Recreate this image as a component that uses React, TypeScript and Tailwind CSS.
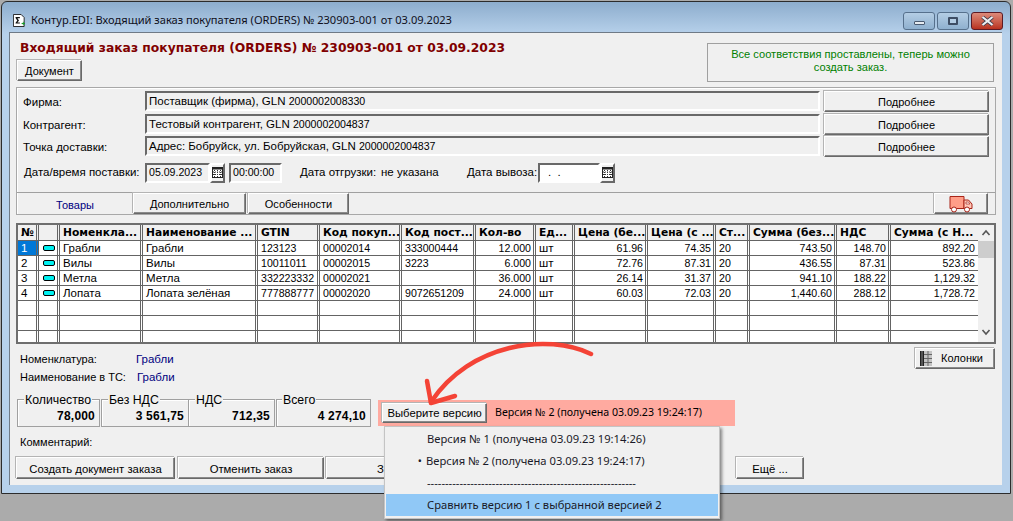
import React from "react";

const btn =
  "flex items-center justify-center bg-[#f0f0f0] border border-t-white border-l-white border-r-[#696969] border-b-[#696969] shadow-[inset_-1px_-1px_0_#8a8a8a,-1px_-1px_0_#b4b4b4] text-black";
const field =
  "flex items-center bg-[#f0f0f0] border-2 border-t-[#696969] border-l-[#696969] border-r-white border-b-white pl-[2px] pt-[1px]";

const widths = "grid grid-cols-[21px_21px_83px_115px_62px_82px_74px_60px_39px_73px_68px_34px_87px_54px_86px]";

const headers = ["№", "", "Номенкла...", "Наименование ...", "GTIN", "Код покуп...", "Код пост...", "Кол-во", "Ед...", "Цена (бе...", "Цена (с ...", "Ст...", "Сумма (без...", "НДС", "Сумма (с Н..."];

const rows = [
  ["1", "", "Грабли", "Грабли", "123123", "00002014", "333000444", "12.000", "шт", "61.96", "74.35", "20", "743.50", "148.70", "892.20"],
  ["2", "", "Вилы", "Вилы", "10011011", "00002015", "3223", "6.000", "шт", "72.76", "87.31", "20", "436.55", "87.31", "523.86"],
  ["3", "", "Метла", "Метла", "332223332", "00002021", "", "36.000", "шт", "26.14", "31.37", "20", "941.10", "188.22", "1,129.32"],
  ["4", "", "Лопата", "Лопата зелёная", "777888777", "00002020", "9072651209", "24.000", "шт", "60.03", "72.03", "20", "1,440.60", "288.12", "1,728.72"],
  ["", "", "", "", "", "", "", "", "", "", "", "", "", "", ""],
  ["", "", "", "", "", "", "", "", "", "", "", "", "", "", ""],
  ["", "", "", "", "", "", "", "", "", "", "", "", "", "", ""],
];
const rightCols = [7, 9, 10, 12, 13, 14];

// The reference's UI font has narrow digits: numbers get a slightly smaller size.
function Mixed({ text }: { text: string }) {
  const parts = text.split(/([\d.,:]{2,})/);
  return (
    <span className="whitespace-pre">
      {parts.map((p, i) =>
        i % 2 === 1 ? (
          <span key={i} className="text-[10.6px]">{p}</span>
        ) : (
          <span key={i}>{p}</span>
        )
      )}
    </span>
  );
}

function Calendar() {
  return (
    <svg width="11" height="11" viewBox="0 0 11 11">
      <rect x="0.5" y="0.5" width="10" height="10" fill="#fff" stroke="#222" />
      <rect x="0.5" y="0.5" width="10" height="2" fill="#222" />
      <path d="M2.5 3v7M5.5 3v7M8.5 3v7M1 5h9M1 7.5h9" stroke="#333" strokeWidth="1" strokeDasharray="1 1" />
    </svg>
  );
}

function CalButton({ cls }: { cls: string }) {
  return (
    <div className={`flex items-center justify-center bg-[#f0f0f0] border-2 border-t-white border-l-white border-r-[#696969] border-b-[#696969] ${cls}`}>
      <Calendar />
    </div>
  );
}

function Truck() {
  return (
    <svg width="24" height="18" viewBox="0 0 24 18">
      <path d="M1 1.5h14v12H1z" fill="#ff9e88" stroke="#a82418" />
      <path d="M15 5h4.5l3.5 4v4.5h-8z" fill="#ffc8b8" stroke="#a82418" />
      <path d="M17 7h2.5l1.5 2h-4z" fill="#fff" stroke="#a82418" strokeWidth="0.7" />
      <circle cx="5" cy="14.5" r="2.5" fill="#fff" stroke="#a82418" />
      <circle cx="18" cy="14.5" r="2.5" fill="#fff" stroke="#a82418" />
    </svg>
  );
}

function ColumnsIcon() {
  return (
    <svg width="12" height="15" viewBox="0 0 12 15" className="shrink-0">
      <rect x="0" y="0" width="1" height="15" fill="#222" />
      <rect x="3" y="0" width="1" height="15" fill="#222" />
      <rect x="1" y="0" width="2" height="15" fill="#555" />
      <rect x="4" y="0" width="8" height="15" fill="#c4c4c4" />
      <path d="M4 3.5h8M4 7.5h8M4 11.5h8M8 0v15" stroke="#666" strokeWidth="1" />
    </svg>
  );
}

function Group({ label, value, w, labelLeft }: { label: string; value: string; w: string; labelLeft: string }) {
  return (
    <div className={`relative h-[28px] border border-[#a0a0a0] shadow-[inset_1px_1px_0_#fff] flex items-end justify-end pr-[4px] pb-[3px] ${w}`}>
      <span className={`absolute -top-[7px] bg-[#f0f0f0] px-[1px] leading-[14px] text-[12.3px] ${labelLeft}`}>{label}</span>
      <span className="font-bold text-[12px] tracking-[0.2px] leading-[14px]">{value}</span>
    </div>
  );
}

export default function App() {
  return (
    <div className="relative w-[1013px] h-[521px] overflow-hidden bg-[#ababab] font-['Liberation_Sans',sans-serif] text-[11.5px] text-black">
      <div className="ml-[1px] mt-[1px] w-[1010px] h-[493px] border border-[#2c2c2c] rounded-t-[6px] bg-[#b7d1eb] bg-gradient-to-b from-[#8dadcd] to-[#b7d1eb] bg-[length:100%_32px] bg-no-repeat">
        {/* Title bar */}
        <div className="h-[30px] flex items-center pt-[6px] pl-[11px] pr-[7px]">
          <svg width="12" height="13" viewBox="0 0 14 15" className="shrink-0">
            <path d="M0.5 0.5h9l3.5 3.5v10.5h-12.5z" fill="#fff" stroke="#111" />
            <path d="M3 3.5h5v1.3H5.2l1.8 2.6-1.8 2.4H8v1.3H3v-1l2-2.7-2-2.9z" fill="#111" />
            <path d="M10 10.5h1.5V9h1v1.5H14v1h-1.5V13h-1v-1.5H10z" fill="#1a9a2a" />
          </svg>
          <span className="ml-[6px] text-[11.1px] text-[#10101c] font-['Noto_Sans',sans-serif]">Контур.EDI: Входящий заказ покупателя (ORDERS) № 230903-001 от 03.09.2023</span>
          <div className="ml-auto flex gap-[2px] mt-[1px]">
            <div className="w-[32px] h-[18px] rounded-[3px] border border-[#56708c] bg-gradient-to-b from-[#b4cde4] to-[#8fb0cf] flex items-center justify-center">
              <div className="w-[11px] h-[4px] mt-[4px] rounded-[1px] bg-[#e6ebf0] border border-[#4a5a70]" />
            </div>
            <div className="w-[32px] h-[18px] rounded-[3px] border border-[#56708c] bg-gradient-to-b from-[#b4cde4] to-[#8fb0cf] flex items-center justify-center">
              <div className="w-[10px] h-[8px] rounded-[1px] border-2 border-[#3e4d64] bg-[#b4cde4]" />
            </div>
            <div className="w-[32px] h-[18px] rounded-[3px] border border-[#5c1a24] bg-gradient-to-b from-[#dc8a7a] to-[#b8301e] flex items-center justify-center">
              <svg width="13" height="10" viewBox="0 0 13 10">
                <path d="M1.5 1l10 8M11.5 1l-10 8" stroke="#3a3a48" strokeWidth="3.6" />
                <path d="M1.5 1l10 8M11.5 1l-10 8" stroke="#eef0f4" strokeWidth="2.2" />
              </svg>
            </div>
          </div>
        </div>

        {/* Client */}
        <div className="ml-[7px] w-[993px] h-[453px] border-t border-l border-[#6f7a86] bg-[#f0f0f0]">
          {/* Header */}
          <div className="h-[54px] flex">
            <div className="pl-[7px]">
              <div className="mt-[7px] pl-[3px] h-[16px] leading-[16px] font-['DejaVu_Sans'] font-bold text-[12.32px] text-[#800000] whitespace-nowrap">
                Входящий заказ покупателя (ORDERS) № 230903-001 от 03.09.2023
              </div>
              <div className={`${btn} mt-[4px] w-[65px] h-[21px] pt-[1px] text-[11px]`}>Документ</div>
            </div>
            <div className="ml-auto mr-[8px] mt-[10px] w-[287px] h-[39px] border border-[#a0a0a0] text-[#008000] text-center text-[11.1px] leading-[13px] pt-[4px] px-[10px]">
              Все соответствия проставлены, теперь можно создать заказ.
            </div>
          </div>

          {/* Panel */}
          <div className="ml-[6px] w-[980px] h-[128px] border border-[#a8a8a8] shadow-[inset_1px_1px_0_#fff] pt-[3px]">
            {[
              ["Фирма:", "Поставщик (фирма), GLN 2000002008330", "mt-0"],
              ["Контрагент:", "Тестовый контрагент, GLN 2000002004837", "mt-[3px]"],
              ["Точка доставки:", "Адрес: Бобруйск, ул. Бобруйская, GLN 2000002004837", "mt-[2px]"],
            ].map(([l, v, m]) => (
              <div key={l} className={`flex h-[20px] ${m}`}>
                <div className="w-[128px] pl-[6px] leading-[22px]">{l}</div>
                <div className={`${field} w-[675px] h-[20px]`}><Mixed text={v} /></div>
                <div className={`${btn} ml-[4px] w-[165px] h-[21px] pt-[1px] text-[11px]`}>Подробнее</div>
              </div>
            ))}
            <div className="flex items-center h-[21px] mt-[6px]">
              <div className="w-[128px] pl-[7px] pt-[1px] whitespace-nowrap">Дата/время поставки:</div>
              <div className={`${field} w-[65px] h-[20px]`}><Mixed text="05.09.2023" /></div>
              <CalButton cls="w-[15px] h-[20px]" />
              <div className={`${field} w-[53px] h-[20px] ml-[4px]`}><Mixed text="00:00:00" /></div>
              <div className="ml-[18px] w-[167px] whitespace-nowrap pt-[1px] flex">
                <span className="w-[81px]">Дата отгрузки:</span>
                <span>не указана</span>
              </div>
              <div className="w-[71px] whitespace-nowrap pt-[1px]">Дата вывоза:</div>
              <div className="w-[62px] h-[20px] flex items-center bg-white border-2 border-t-[#696969] border-l-[#696969] border-r-white border-b-white pl-[8px]">. &nbsp;.</div>
              <CalButton cls="w-[15px] h-[20px]" />
            </div>
            <div className="mt-[9px] h-[21px] border-t border-[#a0a0a0] flex">
              <div className="w-[116px] text-center text-[#000080] leading-[24px] text-[11px]">Товары</div>
              <div className={`${btn} w-[113px] h-[21px] pt-[1px] text-[11px]`}>Дополнительно</div>
              <div className={`${btn} ml-[2px] w-[101px] h-[21px] pt-[1px] text-[11px]`}>Особенности</div>
              <div className={`${btn} ml-[585px] w-[54px] h-[21px]`}><Truck /></div>
            </div>
          </div>

          {/* Grid */}
          <div className="ml-[6px] mt-[8px] w-[980px] h-[121px] border-2 border-[#6e6e6e] bg-white flex overflow-hidden">
            <div className="w-[960px] overflow-hidden">
              <div className={`${widths} h-[16px] bg-[#f0f0f0] border-b border-[#646464]`}>
                {headers.map((h, i) => (
                  <div key={i} className={`${i === 14 ? "" : "border-r-[3px] border-double border-[#646464]"} pl-[3px] whitespace-nowrap font-['DejaVu_Sans'] font-bold text-[10.7px] leading-[15px]`}>
                    {h}
                  </div>
                ))}
              </div>
              {rows.map((r, ri) => (
                <div key={ri} className={`${widths} h-[15px] border-b border-[#646464]`}>
                  {r.map((c, i) => {
                    const selected = ri === 0 && i === 0;
                    const sep = i === 14 ? "" : "border-r-[3px] border-double border-[#646464] ";
                    const base = sep + "whitespace-nowrap overflow-hidden leading-[14px] pl-[3px] pr-[2px] flex items-center";
                    const al = rightCols.includes(i) ? " justify-end" : "";
                    const sel = selected ? " bg-[#0078d7] text-white" : "";
                    return (
                      <div key={i} className={base + al + sel}>
                        {i === 1 && ri < 4 ? (
                          <div className="ml-[1px] w-[12px] h-[6px] rounded-[2px] bg-[#00f0f0] border border-black" />
                        ) : (
                          <Mixed text={c} />
                        )}
                      </div>
                    );
                  })}
                </div>
              ))}
            </div>
            <div className="w-[16px] bg-[#f0f0f0] flex flex-col items-center">
              <svg width="10" height="16" viewBox="0 0 10 16" className="shrink-0">
                <path d="M1.5 10l3.5-4 3.5 4" fill="none" stroke="#555" strokeWidth="1.6" />
              </svg>
              <div className="w-[16px] h-[17px] bg-[#cdcdcd]" />
              <svg width="10" height="16" viewBox="0 0 10 16" className="mt-auto shrink-0 mb-[2px]">
                <path d="M1.5 6l3.5 4 3.5-4" fill="none" stroke="#555" strokeWidth="1.6" />
              </svg>
            </div>
          </div>

          {/* Info */}
          <div className="h-[50px] flex">
            <div className="pl-[10px] text-[11px]">
              <div className="mt-[8px] h-[14px] leading-[14px] flex">
                <span className="w-[116px]">Номенклатура:</span>
                <span className="text-[#000080] text-[11.5px]">Грабли</span>
              </div>
              <div className="mt-[4px] h-[14px] leading-[14px] flex">
                <span className="w-[117px]">Наименование в ТС:</span>
                <span className="text-[#000080] text-[11.5px]">Грабли</span>
              </div>
            </div>
            <div className={`${btn} ml-auto mr-[7px] mt-[4px] w-[80px] h-[21px] justify-start! pl-[4px] gap-[9px] text-[11px]`}>
              <ColumnsIcon />
              <span>Колонки</span>
            </div>
          </div>

          {/* Totals */}
          <div className="flex pl-[7px] mt-[5px] h-[28px]">
            <Group label="Количество" value="78,000" w="w-[83px]" labelLeft="left-[6px]" />
            <Group label="Без НДС" value="3 561,75" w="w-[88px] ml-[1px]" labelLeft="left-[6px]" />
            <Group label="НДС" value="712,35" w="w-[87px] -ml-[1px]" labelLeft="left-[6px]" />
            <Group label="Всего" value="4 274,10" w="w-[95px] ml-[1px]" labelLeft="left-[5px]" />
            <div className="ml-[7px] mt-[1px] w-[357px] h-[26px] bg-[#ffaaa0] flex items-center pl-[4px]">
              <div className={`${btn} w-[105px] h-[20px] text-[11.3px]`}>Выберите версию</div>
              <span className="ml-[8px] font-['Noto_Sans',sans-serif] text-[10.6px]">Версия № 2 (получена 03.09.23 19:24:17)</span>
            </div>
          </div>

          <div className="mt-[8px] pl-[10px] h-[14px] leading-[14px] text-[11px]">Комментарий:</div>

          <div className="mt-[8px] pl-[6px] flex h-[22px] text-[11.3px]">
            <div className={`${btn} w-[159px] h-[22px] pt-[3px]`}>Создать документ заказа</div>
            <div className={`${btn} ml-[3px] w-[146px] h-[22px] pt-[3px]`}>Отменить заказ</div>
            <div className={`${btn} ml-[2px] w-[148px] h-[22px] pt-[3px] justify-start! pl-[50px]`}>З</div>
            <div className={`${btn} ml-[262px] w-[68px] h-[22px] pt-[3px]`}>Ещё ...</div>
          </div>
        </div>
      </div>

      {/* Drop-down menu */}
      <div className="absolute left-[384px] top-[426px] w-[336px] h-[93px] bg-[#f0f0f0] border border-[#c4c4c4] shadow-[2px_2px_3px_rgba(0,0,0,0.45)] pt-[1px] px-[1px] font-['Noto_Sans',sans-serif] text-[11.2px] text-[#1a1a28]">
        {[
          ["", "Версия № 1 (получена 03.09.23 19:14:26)", "w-[41px]"],
          ["•", "Версия № 2 (получена 03.09.23 19:24:17)", "w-[40px]"],
          ["", "----------------------------------------------------------", "w-[41px]"],
        ].map(([b, t, w], i) => (
          <div key={i} className="h-[22px] flex items-center">
            <span className={`${w} text-right pr-[4px] text-[11px]`}>{b}</span>
            <span className="whitespace-nowrap overflow-hidden">{t}</span>
          </div>
        ))}
        <div className="h-[22px] flex items-center bg-[#90c8f6] pl-[41px]">Сравнить версию 1 с выбранной версией 2</div>
      </div>

      {/* Annotation arrow */}
      <svg className="absolute left-0 top-0 pointer-events-none" width="1013" height="521" viewBox="0 0 1013 521">
        <path d="M591 354C548 333 470 343 431 402" fill="none" stroke="#f44336" strokeWidth="4.5" strokeLinecap="round" />
        <path d="M427 381L431 403L455 396" fill="none" stroke="#f44336" strokeWidth="4.5" strokeLinecap="round" strokeLinejoin="round" />
      </svg>
    </div>
  );
}
